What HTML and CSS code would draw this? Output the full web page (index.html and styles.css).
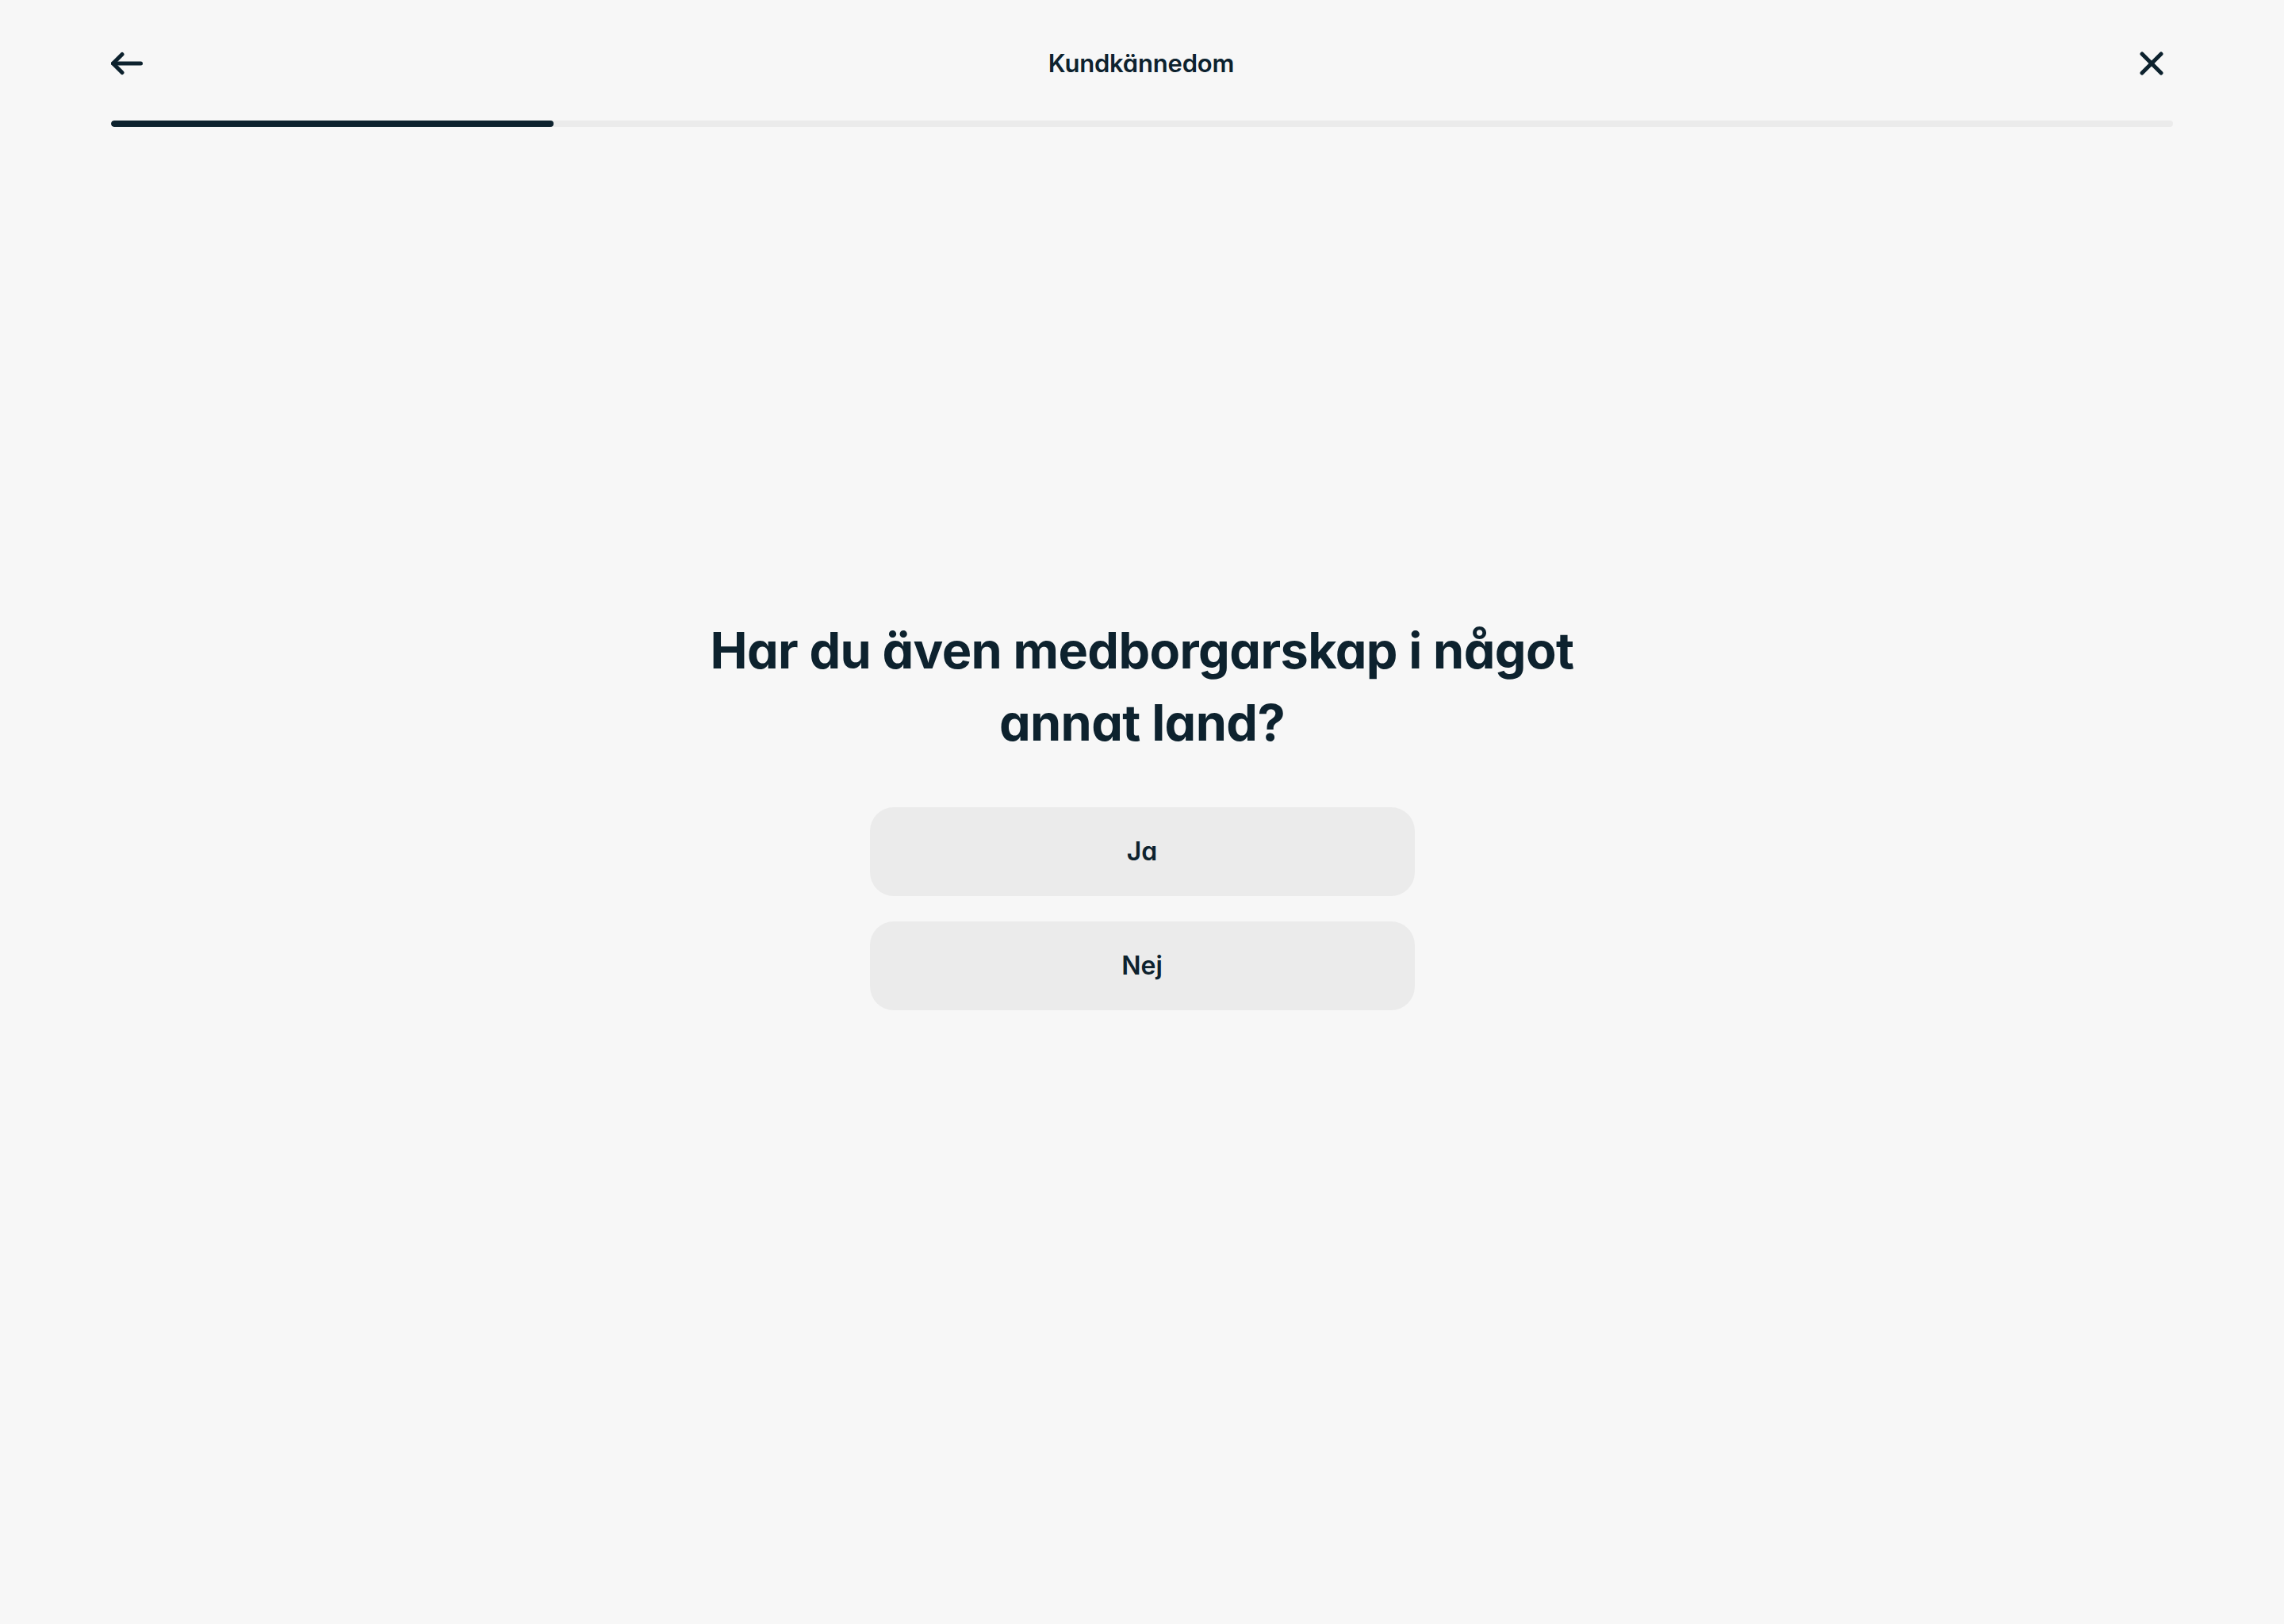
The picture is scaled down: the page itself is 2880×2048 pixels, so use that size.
FILE: index.html
```html
<!DOCTYPE html>
<html lang="sv">
<head>
<meta charset="utf-8">
<title>Kundkännedom</title>
<link rel="stylesheet" href="styles.css">
</head>
<body>
<div class="page">
  <header class="topbar">
    <div class="nav">
      <button class="icon-btn" aria-label="Tillbaka">
        <svg width="40" height="30" viewBox="0 0 40 30" fill="none" stroke="#0d222e" stroke-width="5" stroke-linecap="round" stroke-linejoin="round">
          <path d="M2.5 15H37.5"/>
          <path d="M14 3.5L2.5 15L14 26.5"/>
        </svg>
      </button>
      <h1 class="title">Kundkännedom</h1>
      <button class="icon-btn close" aria-label="Stäng">
        <svg width="30" height="30" viewBox="0 0 30 30" fill="none" stroke="#0d222e" stroke-width="5" stroke-linecap="round">
          <path d="M3 3L27 27"/>
          <path d="M27 3L3 27"/>
        </svg>
      </button>
    </div>
    <div class="progress"><div class="progress-fill" style="width: 21.46%"></div></div>
  </header>
  <main class="main">
    <section class="question">
      <h2 class="heading">Har du även medborgarskap i något annat land?</h2>
      <div class="options">
        <button class="option">Ja</button>
        <button class="option">Nej</button>
      </div>
    </section>
  </main>
</div>
</body>
</html>
```

FILE: styles.css
```css
* { box-sizing: border-box; }
html, body {
  margin: 0;
  padding: 0;
  background: #f7f7f7;
}
body {
  font-family: "Inter", "Noto Sans", sans-serif;
  font-feature-settings: "cv11" 1;
  color: #0d222e;
}
.page {
  min-height: 100vh;
  display: flex;
  flex-direction: column;
}
.topbar {
  padding: 0 140px;
}
.nav {
  display: flex;
  align-items: center;
  justify-content: space-between;
  padding-top: 59px;
  padding-bottom: 51px;
}
.icon-btn {
  background: none;
  border: 0;
  padding: 0;
  width: 44px;
  height: 42px;
  display: flex;
  align-items: center;
  justify-content: flex-start;
  cursor: pointer;
}
.icon-btn.close {
  justify-content: flex-end;
  margin-right: 12px;
  width: 34px;
}
.title {
  margin: 0;
  font-size: 31px;
  font-weight: 600;
  letter-spacing: -0.2px;
  line-height: 42px;
}
.progress {
  height: 8px;
  background: #ebebeb;
  border-radius: 4px;
  overflow: hidden;
}
.progress-fill {
  height: 100%;
  background: #0d222e;
  border-radius: 4px;
}
.main {
  flex: 1;
  display: flex;
  align-items: center;
  justify-content: center;
  padding-bottom: 160px;
}
.question {
  display: flex;
  flex-direction: column;
  align-items: center;
}
.heading {
  margin: 0 0 61px;
  max-width: 1180px;
  text-align: center;
  font-size: 63px;
  line-height: 91px;
  font-weight: 700;
  letter-spacing: -0.6px;
}
.options {
  display: flex;
  flex-direction: column;
  gap: 32px;
  width: 687px;
}
.option {
  height: 112px;
  border: 0;
  border-radius: 30px;
  background: #ebebeb;
  color: #0d222e;
  font-family: inherit;
  font-feature-settings: "cv11" 1;
  font-size: 32px;
  font-weight: 600;
  cursor: pointer;
}
```
